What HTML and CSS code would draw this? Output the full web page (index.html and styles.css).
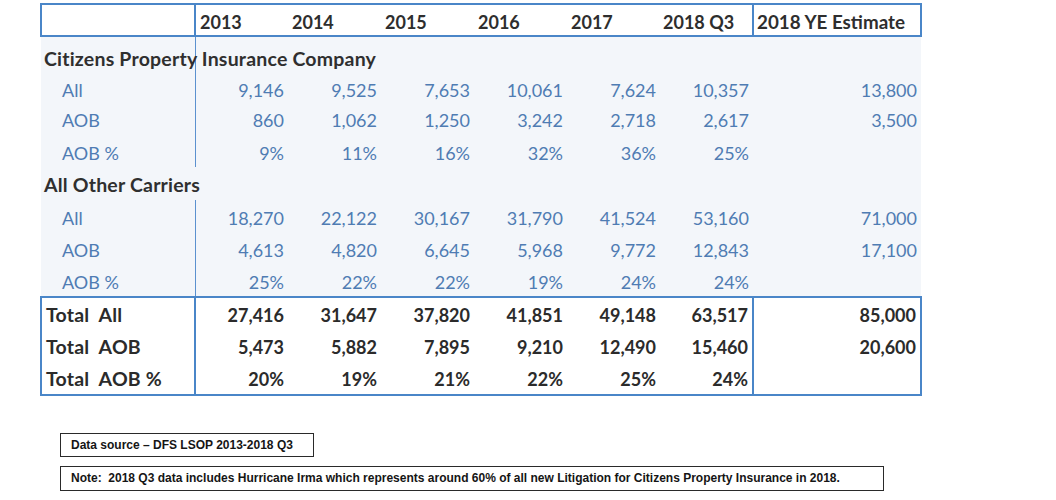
FILE: index.html
```html
<!DOCTYPE html>
<html lang="en">
<head>
<meta charset="utf-8">
<title>AOB Litigation</title>
<link rel="stylesheet" href="styles.css">
</head>
<body>
<div class="page">
  <table class="grid">
    <colgroup>
      <col class="c-label">
      <col class="c-year"><col class="c-year"><col class="c-year"><col class="c-year"><col class="c-year"><col class="c-year">
      <col class="c-ye">
    </colgroup>
    <thead>
      <tr class="head">
        <th class="lbl"></th>
        <th>2013</th><th>2014</th><th>2015</th><th>2016</th><th>2017</th>
        <th class="q3">2018 Q3</th>
        <th class="ye">2018 YE Estimate</th>
      </tr>
    </thead>
    <tbody class="detail">
      <tr class="sec top">
        <td class="lbl">Citizens Property Insurance Company</td>
        <td></td><td></td><td></td><td></td><td></td><td></td><td></td>
      </tr>
      <tr class="lead">
        <td class="lbl sub">All</td>
        <td>9,146</td><td>9,525</td><td>7,653</td><td>10,061</td><td>7,624</td><td>10,357</td><td>13,800</td>
      </tr>
      <tr>
        <td class="lbl sub">AOB</td>
        <td>860</td><td>1,062</td><td>1,250</td><td>3,242</td><td>2,718</td><td>2,617</td><td>3,500</td>
      </tr>
      <tr>
        <td class="lbl sub">AOB %</td>
        <td>9%</td><td>11%</td><td>16%</td><td>32%</td><td>36%</td><td>25%</td><td></td>
      </tr>
      <tr class="sec open">
        <td class="lbl">All Other Carriers</td>
        <td></td><td></td><td></td><td></td><td></td><td></td><td></td>
      </tr>
      <tr>
        <td class="lbl sub">All</td>
        <td>18,270</td><td>22,122</td><td>30,167</td><td>31,790</td><td>41,524</td><td>53,160</td><td>71,000</td>
      </tr>
      <tr>
        <td class="lbl sub">AOB</td>
        <td>4,613</td><td>4,820</td><td>6,645</td><td>5,968</td><td>9,772</td><td>12,843</td><td>17,100</td>
      </tr>
      <tr>
        <td class="lbl sub">AOB %</td>
        <td>25%</td><td>22%</td><td>22%</td><td>19%</td><td>24%</td><td>24%</td><td></td>
      </tr>
    </tbody>
    <tbody class="totals">
      <tr class="first">
        <td class="lbl">Total&nbsp; All</td>
        <td>27,416</td><td>31,647</td><td>37,820</td><td>41,851</td><td>49,148</td><td class="q3">63,517</td><td class="ye">85,000</td>
      </tr>
      <tr>
        <td class="lbl">Total&nbsp; AOB</td>
        <td>5,473</td><td>5,882</td><td>7,895</td><td>9,210</td><td>12,490</td><td class="q3">15,460</td><td class="ye">20,600</td>
      </tr>
      <tr class="last">
        <td class="lbl">Total&nbsp; AOB %</td>
        <td>20%</td><td>19%</td><td>21%</td><td>22%</td><td>25%</td><td class="q3">24%</td><td class="ye"></td>
      </tr>
    </tbody>
  </table>

  <div class="notes">
    <div class="note source">Data source – DFS LSOP 2013-2018 Q3</div>
    <div class="note remark">Note:&nbsp; 2018 Q3 data includes Hurricane Irma which represents around 60% of all new Litigation for Citizens Property Insurance in 2018.</div>
  </div>
</div>
</body>
</html>
```

FILE: styles.css
```css
html, body {
  margin: 0;
  padding: 0;
  background: #ffffff;
}

.page {
  padding: 3px 0 0 40px;
  font-family: Lato, "Open Sans", sans-serif;
}

.grid {
  border-collapse: collapse;
  table-layout: fixed;
  width: 880px;
  font-size: 18px;
  line-height: 22px;
}

.c-label { width: 154px; }
.c-year { width: 93px; }
.c-ye { width: 168px; }

.grid th,
.grid td {
  padding: 0 4px;
  white-space: nowrap;
}

/* header row */
.head th {
  height: 32px;
  box-sizing: border-box;
  text-align: left;
  font-weight: 700;
  color: #2e2e2e;
  background: #ffffff;
  border-top: 2px solid #4a86c8;
  border-bottom: 2px solid #4a86c8;
  padding-left: 4px;
  padding-top: 4px;
}
.head th.lbl { border-left: 2px solid #4a86c8; border-right: 2px solid #4a86c8; }
.head th.q3 { border-right: 2px solid #4a86c8; padding-left: 3px; }
.head th.ye {
  border-right: 2px solid #4a86c8;
  padding-left: 3px;
  font-size: 18.8px;
}

/* detail rows */
.detail tr { height: 32.4px; }
.detail td {
  background: #f3f6fa;
  color: #4f7cb3;
  text-align: right;
  vertical-align: top;
  padding-top: 7px;
}
.detail td.lbl {
  text-align: left;
  border-right: 1px solid #5b91cf;
}
.detail td.sub { padding-left: 21px; }
.detail .sec td.lbl {
  color: #2f2f2f;
  font-weight: 700;
  font-size: 19.5px;
  letter-spacing: 0.2px;
  padding-left: 3px;
  overflow: visible;
}
.detail .sec.top td { padding-top: 11px; }
.detail .lead td { padding-top: 9px; }
.detail .sec.open td.lbl { border-right-color: transparent; }

/* totals block */
.totals tr { height: 32.6px; }
.totals td {
  background: #ffffff;
  color: #2b2b2b;
  font-weight: 700;
  text-align: right;
  padding-top: 2px;
}
.totals td.lbl {
  text-align: left;
  border-left: 2px solid #4a86c8;
  border-right: 2px solid #4a86c8;
  padding-left: 4px;
  font-size: 19.5px;
  letter-spacing: 0.2px;
}
.totals td.q3 { border-right: 2px solid #4a86c8; }
.totals td.ye { border-right: 2px solid #4a86c8; }
.totals tr.first td { border-top: 2px solid #4a86c8; }
.totals tr.last td { border-bottom: 2px solid #4a86c8; }

/* footnotes */
.notes {
  margin: 37px 0 0 20px;
  display: flex;
  flex-direction: column;
  align-items: flex-start;
  gap: 9px;
  font-family: "Liberation Sans", Arial, sans-serif;
  font-weight: 700;
  font-size: 12px;
  color: #151515;
}

.note {
  box-sizing: border-box;
  border: 1.5px solid #2a2a2a;
  padding: 0 0 0 10px;
  display: flex;
  align-items: center;
}
.source { width: 254px; height: 24px; }
.remark { width: 824px; height: 25px; }
```
